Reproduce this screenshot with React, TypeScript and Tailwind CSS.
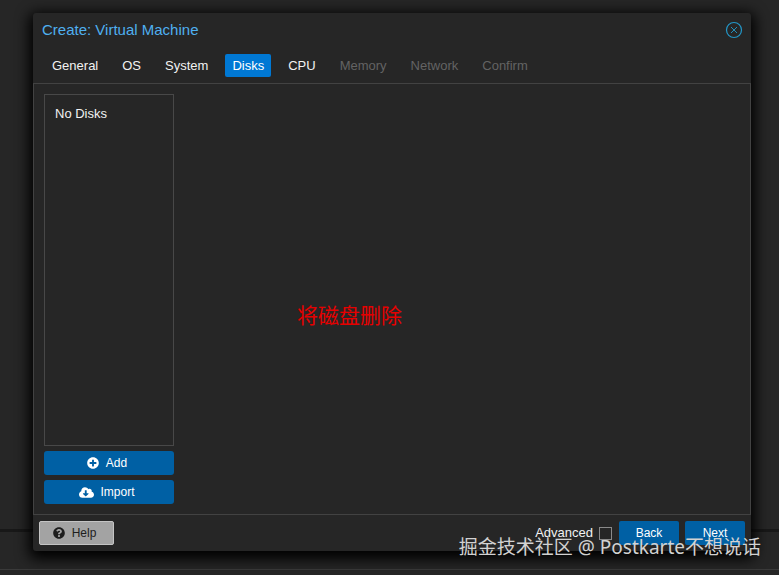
import { useState } from 'react';
import { FaCloudDownloadAlt, FaPlusCircle, FaQuestionCircle } from 'react-icons/fa';

const tabs = [
  { name: 'General', enabled: true },
  { name: 'OS', enabled: true },
  { name: 'System', enabled: true },
  { name: 'Disks', enabled: true },
  { name: 'CPU', enabled: true },
  { name: 'Memory', enabled: false },
  { name: 'Network', enabled: false },
  { name: 'Confirm', enabled: false },
];

function tabStyle(active: boolean, enabled: boolean) {
  if (active) return 'bg-[#0078d4] text-white';
  if (enabled) return 'text-[#f2f2f2]';
  return 'text-[#636363]';
}

export default function App() {
  const [active, setActive] = useState('Disks');
  const [advanced, setAdvanced] = useState(false);

  return (
    <div className="relative flex min-h-screen flex-col bg-[#262626] pt-[13px] pr-7 pb-6 pl-[33px] font-['Liberation_Sans',Arial,sans-serif] text-[13px] text-[#f2f2f2]">
      {/* Panels behind the dialog */}
      <div className="absolute inset-x-0 bottom-[43px] h-[3px] bg-[#181818]" />
      <div className="absolute inset-x-0 bottom-[5px] h-px bg-[#3a3a3a]" />

      <div
        role="dialog"
        aria-labelledby="dialog-title"
        className="relative flex flex-1 flex-col rounded-[3px] bg-[#262626] shadow-[0_4px_14px_4px_#000000]"
      >
        <header className="flex h-[34px] items-center justify-between pr-2 pl-[9px]">
          <h1 id="dialog-title" className="text-[15px] text-[#4fb0f0]">
            Create: Virtual Machine
          </h1>
          <button type="button" aria-label="Close" className="text-[#2397c8]">
            <svg viewBox="0 0 18 18" className="size-[18px]" fill="none" stroke="currentColor">
              <circle cx="9" cy="9" r="7.5" strokeWidth="1.2" />
              <path d="M6 6l6 6M12 6l-6 6" strokeWidth="0.9" />
            </svg>
          </button>
        </header>

        <nav className="flex h-9 items-center gap-[10px] px-3 pt-px">
          {tabs.map((tab) => (
            <button
              key={tab.name}
              type="button"
              disabled={!tab.enabled}
              onClick={() => setActive(tab.name)}
              className={`h-[23px] rounded-[2px] px-[7px] ${tabStyle(tab.name === active, tab.enabled)}`}
            >
              {tab.name}
            </button>
          ))}
        </nav>

        <main className="flex flex-1 border border-[#424242] p-[10px]">
          <div className="flex w-[130px] flex-col gap-[5px]">
            <div className="flex-1 border border-[#484848] px-[10px] py-[9px]">No Disks</div>
            <button
              type="button"
              className="flex h-6 items-center justify-center gap-[7px] rounded-[3px] bg-[#0060a4] pr-1 text-[12px] text-white"
            >
              <FaPlusCircle className="size-3" />
              Add
            </button>
            <button
              type="button"
              className="flex h-6 items-center justify-center gap-[6px] rounded-[3px] bg-[#0060a4] pr-1 text-[12px] text-white"
            >
              <FaCloudDownloadAlt className="h-[13px] w-[15px]" />
              Import
            </button>
          </div>
          <div className="flex flex-1 items-center pl-[123px]">
            <p className="pt-[30px] font-['Noto_Sans_CJK_SC',sans-serif] text-[21px] leading-6 text-[#e60000]">
              将磁盘删除
            </p>
          </div>
        </main>

        <footer className="flex h-9 items-center justify-between px-[6px]">
          <button
            type="button"
            className="flex h-6 w-[75px] items-center justify-center gap-[7px] rounded-[2px] border border-[#c4c4c4] bg-[#a3a3a3] pr-1 text-[12px] text-[#1e1e1e]"
          >
            <FaQuestionCircle className="size-3" />
            Help
          </button>
          <div className="flex items-center gap-[6px]">
            <label htmlFor="advanced">Advanced</label>
            <input
              id="advanced"
              type="checkbox"
              checked={advanced}
              onChange={(e) => setAdvanced(e.target.checked)}
              className="mr-px size-[13px] appearance-none border border-[#8a8a8a] checked:bg-[#0078d4]"
            />
            <button type="button" className="h-6 w-[60px] rounded-[2px] bg-[#0060a4] text-[12px] text-white">
              Back
            </button>
            <button type="button" className="h-6 w-[60px] rounded-[2px] bg-[#0060a4] text-[12px] text-white">
              Next
            </button>
          </div>
        </footer>
      </div>

      <p className="pointer-events-none absolute right-[18px] bottom-4 font-['Noto_Sans','Noto_Sans_CJK_SC',sans-serif] text-[19px] leading-6 whitespace-nowrap text-[#d2d2d2]">
        掘金技术社区 @ Postkarte不想说话
      </p>
    </div>
  );
}
